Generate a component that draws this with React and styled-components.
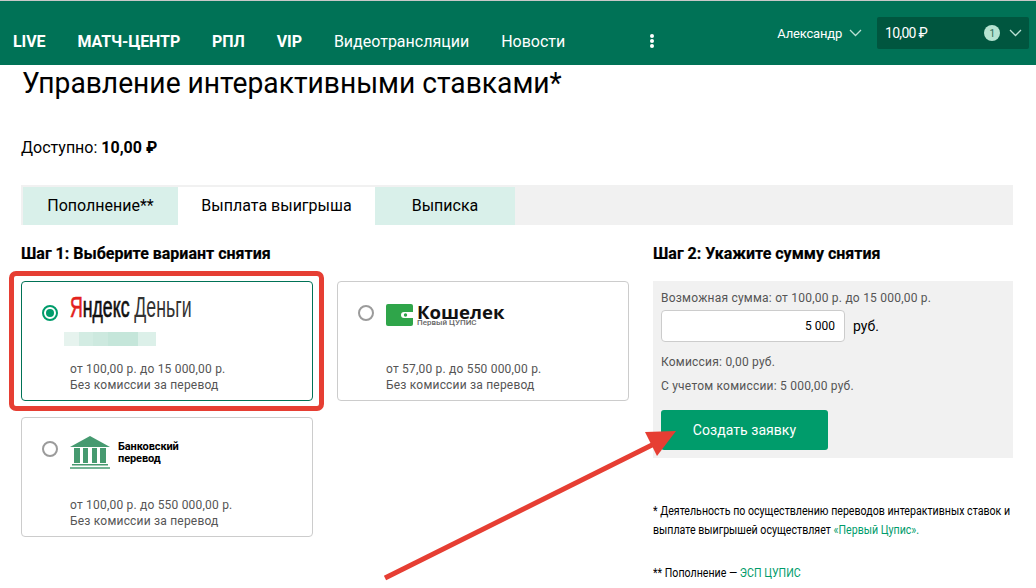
import styled, { createGlobalStyle } from 'styled-components'

const Global = createGlobalStyle`
  html, body {
    margin: 0;
    padding: 0;
    background: #fff;
    font-family: Roboto, "Liberation Sans", sans-serif;
    color: #000;
  }
  * { box-sizing: border-box; }
`

const Page = styled.div`
  position: relative;
  width: 1036px;
  height: 588px;
  overflow: hidden;
  border-top: 1px solid #c8c8c8;
`

const Header = styled.header`
  display: flex;
  height: 64px;
  background: #007256;
  padding: 0 7px 0 13px;
`

const Nav = styled.nav`
  display: flex;
  align-items: center;
  gap: 32px;
  height: 48px;
  margin-top: 16px;
`

const NavItem = styled.a`
  color: #fff;
  font-size: 16px;
  letter-spacing: ${({ $bold }) => ($bold ? '-0.1px' : '0')};
  font-weight: ${({ $bold }) => ($bold ? 700 : 400)};
  white-space: nowrap;
`

const Kebab = styled.div`
  display: flex;
  flex-direction: column;
  gap: 1px;
  align-self: center;
  margin: 16px 0 0 85px;
  span {
    width: 4px;
    height: 4px;
    border-radius: 50%;
    background: #fff;
  }
`

const UserArea = styled.div`
  display: flex;
  align-items: center;
  margin-left: auto;
  height: 32px;
  margin-top: 16px;
`

const UserName = styled.span`
  color: #fff;
  font-size: 13px;
  letter-spacing: -0.2px;
`

const Chevron = styled.svg`
  width: 13px;
  height: 8px;
  fill: none;
  stroke: #b9e0d3;
  stroke-width: 1.3;
`

const UserToggle = styled.div`
  display: flex;
  align-items: center;
  gap: 7px;
  margin-right: 15px;
`

const Balance = styled.div`
  display: flex;
  align-items: center;
  width: 152px;
  height: 32px;
  padding: 0 7px 0 8px;
  background: #00563f;
  border-radius: 2px;
  color: #fff;
  font-size: 14px;
  letter-spacing: -0.7px;
`

const Badge = styled.span`
  display: flex;
  align-items: center;
  justify-content: center;
  width: 16px;
  height: 16px;
  margin: 0 9px 0 auto;
  border-radius: 50%;
  background: #b5e3d1;
  color: #2b6b55;
  font-size: 10px;
`

const Main = styled.main`
  padding: 0 23px 0 21px;
`

const Title = styled.h1`
  margin: 0;
  padding-left: 1px;
  font-size: 30px;
  font-weight: 400;
  line-height: 36px;
  white-space: nowrap;
  transform: scaleX(0.94);
  transform-origin: left center;
`

const Available = styled.p`
  margin: 37px 0 0;
  font-size: 16px;
  line-height: 20px;
  b { font-weight: 700; }
`

const Tabs = styled.div`
  display: flex;
  height: 40px;
  margin-top: 27px;
  padding: 2px 0 0 2px;
  background: #f1f1f1;
`

const Tab = styled.div`
  display: flex;
  align-items: center;
  justify-content: center;
  width: ${({ $w }) => $w}px;
  padding-bottom: 2px;
  background: ${({ $active }) => ($active ? '#fff' : '#d9f0ea')};
  font-size: 16px;
`

const Columns = styled.div`
  display: grid;
  grid-template-columns: 608px 360px;
  column-gap: 24px;
  margin-top: 19px;
`

const StepTitle = styled.h2`
  margin: 0 0 17px;
  font-size: 16px;
  line-height: 20px;
  font-weight: 700;
  -webkit-text-stroke: 0.2px #000;
`

const Cards = styled.div`
  display: grid;
  grid-template-columns: 292px 292px;
  grid-auto-rows: 120px;
  gap: 16px 24px;
`

const Card = styled.div`
  position: relative;
  display: flex;
  gap: 12px;
  padding: 23px 16px 7px 20px;
  border: 1px solid ${({ $selected }) => ($selected ? '#007256' : '#cccccc')};
  border-radius: 4px;
  background: #fff;
  &::after {
    content: '';
    display: ${({ $selected }) => ($selected ? 'block' : 'none')};
    position: absolute;
    top: -11px;
    left: -13px;
    right: -12px;
    bottom: -11px;
    border: 5px solid #e63e33;
    border-radius: 7px;
    pointer-events: none;
  }
`

const Radio = styled.span`
  flex: none;
  display: flex;
  align-items: center;
  justify-content: center;
  width: 16px;
  height: 16px;
  border: 2px solid ${({ $selected }) => ($selected ? '#009c6b' : '#9b9b9b')};
  border-radius: 50%;
  &::before {
    content: '';
    display: ${({ $selected }) => ($selected ? 'block' : 'none')};
    width: 8px;
    height: 8px;
    border-radius: 50%;
    background: #009c6b;
  }
`

const CardBody = styled.div`
  display: flex;
  flex-direction: column;
  flex: 1;
`

const Terms = styled.div`
  margin-top: auto;
  color: #555;
  font-size: 12px;
  line-height: 16px;
  letter-spacing: 0.2px;
`

const YandexLogo = styled.div`
  display: flex;
  gap: 8px;
  height: 26px;
  margin-top: -13px;
  font-family: "Liberation Sans", Arial, sans-serif;
  font-size: 29px;
  line-height: 30px;
  transform: scaleX(0.61);
  transform-origin: left center;
  white-space: nowrap;
  color: #111;
  b { font-weight: 400; -webkit-text-stroke: 0.7px #111; }
  i { font-style: normal; color: #e3221c; -webkit-text-stroke-color: #e3221c; }
  span { color: #333; font-weight: 400; }
`

const MaskedAccount = styled.div`
  width: 92px;
  height: 14px;
  margin: 14px 0 0 -6px;
  background: linear-gradient(90deg, #e6f3ee 0 16%, #d3ece3 16% 32%, #cde9df 32% 48%, #c5e6da 48% 80%, #dcf0e9 80% 100%);
`

const WalletLogo = styled.div`
  display: flex;
  gap: 4px;
  margin-top: -1px;
`

const WalletName = styled.div`
  font-family: "Open Sans", sans-serif;
  color: #111;
  font-size: 18.6px;
  font-weight: 700;
  line-height: 15px;
  small {
    display: block;
    color: #666;
    font-family: Roboto, sans-serif;
    font-size: 8px;
    font-weight: 500;
    line-height: 7px;
  }
`

const BankLogo = styled.div`
  display: flex;
  align-items: flex-start;
  gap: 8px;
  margin-top: -5px;
`

const BankName = styled.div`
  margin-top: 5px;
  font-size: 11px;
  font-weight: 700;
  line-height: 12px;
  letter-spacing: -0.1px;
`

const AmountPanel = styled.div`
  height: 177px;
  padding: 9px 8px 8px;
  background: #f1f1f1;
  color: #555;
  font-size: 12px;
  line-height: 16px;
  letter-spacing: 0.22px;
`

const AmountRow = styled.div`
  display: flex;
  align-items: center;
  gap: 8px;
  margin: 4px 0 12px;
  color: #000;
  font-size: 14px;
  letter-spacing: 0;
`

const AmountInput = styled.div`
  width: 184px;
  height: 32px;
  padding: 0 9px;
  background: #fff;
  border: 1px solid #ccc;
  border-radius: 4px;
  font-size: 12px;
  line-height: 30px;
  text-align: right;
`

const PanelLine = styled.p`
  margin: 0 0 8px;
`

const SubmitButton = styled.button`
  display: block;
  width: 167px;
  height: 40px;
  margin-top: 16px;
  border: 0;
  border-radius: 3px;
  background: #009c6b;
  color: #fff;
  font-family: inherit;
  font-size: 14px;
  letter-spacing: 0.05px;
`

const Notes = styled.div`
  margin-top: 44px;
  font-size: 12px;
  line-height: 19px;
  white-space: nowrap;
  transform: scaleX(0.885);
  transform-origin: left top;
  a { color: #009c6b; }
`

const NotePara = styled.p`
  margin: 0 0 24px;
`

const ArrowOverlay = styled.svg`
  position: absolute;
  left: 0;
  top: 0;
  width: 1036px;
  height: 588px;
  pointer-events: none;
`

const Arrow = () => (
  <ArrowOverlay viewBox="0 0 1036 588">
    <line x1="385" y1="577" x2="656" y2="442" stroke="#e63e33" strokeWidth="5" />
    <polygon points="645,431 676,430 657,455" fill="#e63e33" />
  </ArrowOverlay>
)

const ChevronIcon = () => (
  <Chevron viewBox="0 0 13 8">
    <path d="M1 1l5.5 5.5L12 1" />
  </Chevron>
)

const WalletIcon = () => (
  <svg width="27" height="22" viewBox="0 0 27 22">
    <rect width="27" height="22" rx="2" fill="#2fa54a" />
    <path d="M27 8h-9a3 3 0 0 0 0 6h9z" fill="#fff" />
    <circle cx="19.5" cy="11" r="1.7" fill="#2fa54a" />
  </svg>
)

const BankIcon = () => (
  <svg width="40" height="33" viewBox="0 0 40 33">
    <path d="M20 0L40 11H0z" fill="#469a70" />
    <path d="M4 12h6v15H4zM13 12h5v15h-5zM22 12h5v15h-5zM30 12h6v15h-6z" fill="#469a70" />
    <rect x="2" y="28" width="36" height="1.5" fill="#469a70" />
    <rect x="0" y="31" width="40" height="2" fill="#74b596" />
  </svg>
)

export default function App() {
  return (
    <Page>
      <Global />
      <Header>
        <Nav>
          <NavItem $bold>LIVE</NavItem>
          <NavItem $bold>МАТЧ-ЦЕНТР</NavItem>
          <NavItem $bold>РПЛ</NavItem>
          <NavItem $bold>VIP</NavItem>
          <NavItem>Видеотрансляции</NavItem>
          <NavItem>Новости</NavItem>
        </Nav>
        <Kebab><span /><span /><span /></Kebab>
        <UserArea>
          <UserToggle>
            <UserName>Александр</UserName>
            <ChevronIcon />
          </UserToggle>
          <Balance>
            10,00 ₽
            <Badge>1</Badge>
            <ChevronIcon />
          </Balance>
        </UserArea>
      </Header>
      <Main>
        <Title>Управление интерактивными ставками*</Title>
        <Available>Доступно: <b>10,00 ₽</b></Available>
        <Tabs>
          <Tab $w={155}>Пополнение**</Tab>
          <Tab $w={197} $active>Выплата выигрыша</Tab>
          <Tab $w={140}>Выписка</Tab>
        </Tabs>
        <Columns>
          <section>
            <StepTitle>Шаг 1: Выберите вариант снятия</StepTitle>
            <Cards>
              <Card $selected>
                <Radio $selected />
                <CardBody>
                  <YandexLogo>
                    <b><i>Я</i>ндекс</b>
                    <span>Деньги</span>
                  </YandexLogo>
                  <MaskedAccount />
                  <Terms>от 100,00 р. до 15 000,00 р.<br />Без комиссии за перевод</Terms>
                </CardBody>
              </Card>
              <Card>
                <Radio />
                <CardBody>
                  <WalletLogo>
                    <WalletIcon />
                    <WalletName>Кошелек<small>Первый ЦУПИС</small></WalletName>
                  </WalletLogo>
                  <Terms>от 57,00 р. до 550 000,00 р.<br />Без комиссии за перевод</Terms>
                </CardBody>
              </Card>
              <Card>
                <Radio />
                <CardBody>
                  <BankLogo>
                    <BankIcon />
                    <BankName>Банковский<br />перевод</BankName>
                  </BankLogo>
                  <Terms>от 100,00 р. до 550 000,00 р.<br />Без комиссии за перевод</Terms>
                </CardBody>
              </Card>
            </Cards>
          </section>
          <section>
            <StepTitle>Шаг 2: Укажите сумму снятия</StepTitle>
            <AmountPanel>
              <div>Возможная сумма: от 100,00 р. до 15 000,00 р.</div>
              <AmountRow>
                <AmountInput>5 000</AmountInput>
                руб.
              </AmountRow>
              <PanelLine>Комиссия: 0,00 руб.</PanelLine>
              <PanelLine>С учетом комиссии: 5 000,00 руб.</PanelLine>
              <SubmitButton>Создать заявку</SubmitButton>
            </AmountPanel>
            <Notes>
              <NotePara>
                * Деятельность по осуществлению переводов интерактивных ставок и<br />
                выплате выигрышей осуществляет <a>«Первый Цупис».</a>
              </NotePara>
              <NotePara>** Пополнение — <a>ЭСП ЦУПИС</a></NotePara>
            </Notes>
          </section>
        </Columns>
      </Main>
      <Arrow />
    </Page>
  )
}
